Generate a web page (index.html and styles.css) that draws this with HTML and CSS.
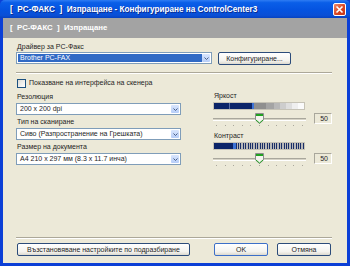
FILE: index.html
```html
<!DOCTYPE html>
<html lang="bg">
<head>
    <meta charset="UTF-8">
    <title>PC-ФАКС Изпращане</title>
    <link rel="stylesheet" href="styles.css">
</head>
<body>
    <div class="window">
        <div class="titlebar">
            <span class="title">[&nbsp; PC-ФАКС &nbsp;]&nbsp; Изпращане - Конфигуриране на ControlCenter3</span>
            <span class="closeBtn">
                <svg width="9" height="9" viewBox="0 0 9 9"><path d="M1.5 1.5 L7.5 7.5 M7.5 1.5 L1.5 7.5" stroke="#fff" stroke-width="1.6"/></svg>
            </span>
        </div>
        <div class="tabbar">[&nbsp; PC-ФАКС &nbsp;]&nbsp; Изпращане</div>

        <div class="content">
            <div class="label">Драйвер за PC-Факс</div>
            <div class="driverRow">
                <div class="select driverSelect">
                    <span class="value selected">Brother PC-FAX</span>
                    <span class="arrow"><svg width="5" height="3" viewBox="0 0 5 3"><path d="M0.5 0.5 L2.5 2.5 L4.5 0.5" fill="none" stroke="#4d6185" stroke-width="1"/></svg></span>
                </div>
                <button class="btn configBtn">Конфигуриране...</button>
            </div>

            <div class="sep"></div>

            <div class="check"><span class="box"></span>Показване на интерфейса на скенера</div>

            <div class="columns">
                <!-- scan options -->
                <div class="leftCol">
                    <div class="label">Резолюция</div>
                    <div class="select">
                        <span class="value">200 x 200 dpi</span>
                        <span class="arrow"><svg width="5" height="3" viewBox="0 0 5 3"><path d="M0.5 0.5 L2.5 2.5 L4.5 0.5" fill="none" stroke="#4d6185" stroke-width="1"/></svg></span>
                    </div>
                    <div class="label">Тип на сканиране</div>
                    <div class="select">
                        <span class="value">Сиво (Разпространение на Грешката)</span>
                        <span class="arrow"><svg width="5" height="3" viewBox="0 0 5 3"><path d="M0.5 0.5 L2.5 2.5 L4.5 0.5" fill="none" stroke="#4d6185" stroke-width="1"/></svg></span>
                    </div>
                    <div class="label">Размер на документа</div>
                    <div class="select">
                        <span class="value">A4 210 x 297 мм (8.3 x 11.7 инча)</span>
                        <span class="arrow"><svg width="5" height="3" viewBox="0 0 5 3"><path d="M0.5 0.5 L2.5 2.5 L4.5 0.5" fill="none" stroke="#4d6185" stroke-width="1"/></svg></span>
                    </div>
                </div>

                <!-- brightness / contrast -->
                <div class="rightCol">
                    <div class="label">Яркост</div>
                    <div class="bar brightBar"></div>
                    <div class="sliderRow">
                        <div class="slider">
                            <div class="track"></div>
                            <svg class="thumb" width="9" height="11" viewBox="0 0 9 11"><path d="M0.5 0.5 H8.5 V7 L4.5 10.5 L0.5 7 Z" fill="#f4f3ee" stroke="#8d8d8d"/><rect x="1" y="1" width="7" height="2" fill="#21a121"/><path d="M1 7 L4.5 10 L8 7" fill="none" stroke="#21a121"/></svg>
                            <div class="ticks"><i></i><i></i><i></i><i></i><i></i><i></i><i></i><i></i><i></i><i></i><i></i></div>
                        </div>
                        <div class="valueBox">50</div>
                    </div>

                    <div class="label">Контраст</div>
                    <div class="bar contrastBar"></div>
                    <div class="sliderRow">
                        <div class="slider">
                            <div class="track"></div>
                            <svg class="thumb" width="9" height="11" viewBox="0 0 9 11"><path d="M0.5 0.5 H8.5 V7 L4.5 10.5 L0.5 7 Z" fill="#f4f3ee" stroke="#8d8d8d"/><rect x="1" y="1" width="7" height="2" fill="#21a121"/><path d="M1 7 L4.5 10 L8 7" fill="none" stroke="#21a121"/></svg>
                            <div class="ticks"><i></i><i></i><i></i><i></i><i></i><i></i><i></i><i></i><i></i><i></i><i></i></div>
                        </div>
                        <div class="valueBox">50</div>
                    </div>
                </div>
            </div>

            <div class="spacer"></div>
            <div class="sep"></div>

            <div class="footer">
                <button class="btn resetBtn">Възстановяване настройките по подразбиране</button>
                <button class="btn okBtn">OK</button>
                <button class="btn cancelBtn">Отмяна</button>
            </div>
        </div>
    </div>
</body>
</html>
```

FILE: styles.css
```css
body {
    margin: 0;
    padding: 0;
    font-family: "Liberation Sans", Arial, sans-serif;
    font-size: 7px;
    color: #1e1e1e;
}

.window {
    width: 350px;
    height: 266px;
    box-sizing: border-box;
    display: flex;
    flex-direction: column;
    background: #0b3fd6;
    padding: 0 3px 3px 3px;
}

.titlebar {
    height: 18px;
    margin: 0 -3px;
    padding: 0 4px 0 10px;
    display: flex;
    align-items: center;
    background: linear-gradient(#2e7cf3 0%, #0a5ee8 15%, #0553e0 55%, #0a4fd6 85%, #0742c0 100%);
    border-radius: 5px 5px 0 0;
}

.title {
    flex: 1;
    color: white;
    font-weight: bold;
    font-size: 8.2px;
    text-shadow: 1px 1px 0 #0a2e91;
    white-space: nowrap;
}

.closeBtn {
    width: 13px;
    height: 13px;
    box-sizing: border-box;
    border: 1px solid #fff;
    border-radius: 2px;
    background: linear-gradient(135deg, #ee8a6c, #d8421e 60%, #c3391a);
    display: flex;
    align-items: center;
    justify-content: center;
}

.tabbar {
    height: 20px;
    line-height: 20px;
    padding-left: 7px;
    background: #a3a3a3;
    color: white;
    font-weight: bold;
    font-size: 7.8px;
}

.content {
    flex: 1;
    background: #ece9d8;
    padding: 4px 15px 7px 13px;
    display: flex;
    flex-direction: column;
}

.label {
    height: 10px;
    line-height: 10px;
    padding-left: 1px;
}

.select {
    height: 12px;
    box-sizing: border-box;
    border: 1px solid #7f9db9;
    background: white;
    display: flex;
    align-items: stretch;
    padding: 1px;
}

.select .value {
    flex: 1;
    line-height: 8px;
    padding-left: 2px;
    white-space: nowrap;
    overflow: hidden;
}

.select .value.selected {
    background: #316ac5;
    color: white;
}

.arrow {
    width: 8px;
    background: linear-gradient(#d9e6fd, #b6cdf8);
    border-radius: 1px;
    display: flex;
    align-items: center;
    justify-content: center;
}

.driverRow {
    display: flex;
    align-items: flex-start;
}

.driverSelect {
    width: 196px;
}

.btn {
    font-family: inherit;
    font-size: 7px;
    height: 13px;
    padding: 0;
    box-sizing: border-box;
    border: 1px solid #2c4c7a;
    border-radius: 2px;
    background: linear-gradient(#ffffff, #f4f3ee 70%, #dcd9cf);
    color: #1e1e1e;
    white-space: nowrap;
}

.configBtn {
    width: 73px;
    margin-left: 6px;
}

.sep {
    height: 0;
    border-top: 1px solid #aca899;
    border-bottom: 1px solid #fff;
    margin-top: 7px;
}

.check {
    margin-top: 4px;
    height: 10px;
    line-height: 10px;
    display: flex;
    align-items: center;
    padding-left: 1px;
}

.box {
    width: 9px;
    height: 9px;
    box-sizing: border-box;
    border: 1px solid #1c5180;
    background: linear-gradient(135deg, #dcdbd5, #fff);
    margin-right: 3px;
}

.columns {
    display: flex;
    margin-top: 3px;
}

.leftCol {
    width: 165px;
}

.leftCol .label {
    height: 12px;
    line-height: 12px;
}

.leftCol .select + .label {
    margin-top: 1px;
}

.rightCol {
    margin-left: auto;
    width: 119px;
}

.bar {
    width: 92px;
    height: 8px;
    box-sizing: border-box;
    border: 1px solid #c6c3b6;
    margin-top: 1px;
}

.brightBar {
    background: linear-gradient(90deg,
        #0b2468 0 15px, #5a6fa6 15px 16px, #0b2468 16px 38px,
        #3d73d6 38px 40px,
        #8f8f8f 40px 52px, #a4a4a4 52px 60px, #b8b8b8 60px 66px,
        #cdcdcd 66px 72px, #dedede 72px 78px, #efefef 78px 84px, #fbfbfb 84px);
}

.contrastBar {
    background:
        linear-gradient(90deg, #0b2468 0 19px, #3d73d6 19px 22px, transparent 22px),
        repeating-linear-gradient(90deg, #1a2e66 0 1px, #b8b8b8 1px 2.4px);
}

.sliderRow {
    display: flex;
    height: 15px;
    margin-top: 2px;
}

.slider {
    position: relative;
    width: 93px;
}

.track {
    margin-top: 6px;
    height: 1px;
    border-top: 1px solid #a9a79c;
    border-bottom: 1px solid #fff;
    background: #d6d3c6;
}

.thumb {
    position: absolute;
    left: 42px;
    top: 1px;
}

.ticks {
    display: flex;
    justify-content: space-between;
    margin-top: 4px;
    padding: 0 3px;
}

.ticks i {
    width: 1px;
    height: 1px;
    background: #a9a79c;
}

.valueBox {
    margin-left: auto;
    width: 18px;
    height: 11px;
    box-sizing: border-box;
    border: 1px solid #a9a79c;
    border-right-color: #fff;
    border-bottom-color: #fff;
    text-align: right;
    padding-right: 3px;
    line-height: 9px;
    margin-top: 1px;
}

.rightCol .sliderRow + .label {
    margin-top: 4px;
}

.spacer {
    flex: 1;
}

.footer {
    display: flex;
    margin-top: 4px;
}

.resetBtn {
    width: 173px;
    margin-left: 1px;
}

.okBtn {
    width: 54px;
    margin-left: auto;
    border-color: #3c6fc8;
}

.cancelBtn {
    width: 54px;
    margin-left: 9px;
    margin-right: 1px;
}
```
